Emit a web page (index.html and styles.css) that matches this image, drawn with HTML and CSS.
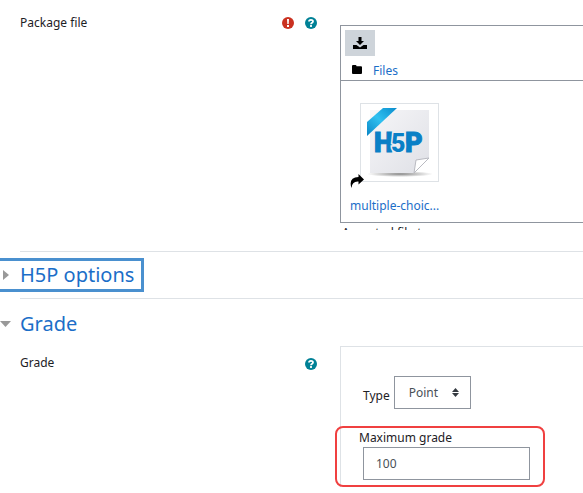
FILE: index.html
```html
<!DOCTYPE html>
<html lang="en">
<head>
  <meta charset="UTF-8">
  <title>H5P settings</title>
  <link rel="stylesheet" href="styles.css">
</head>
<body>
  <form>
    <div class="row package">
      <label class="name" for="download">Package file</label>
      <div class="icons">
        <svg class="icon required" viewBox="0 0 12 12"><circle cx="6" cy="6" r="6"/><path d="M5 2h2l-.3 5H5.3zM5 8h2v2H5z" fill="#fff"/></svg>
        <svg class="icon help" viewBox="0 0 12 12"><circle cx="6" cy="6" r="6"/><path d="M4 4.6C4 2.400 8 2.400 8 4.500 8 5.800 6 5.700 6 7.200" fill="none" stroke="#fff" stroke-width="1.8"/><path d="M5.100 8.100h1.800v1.800H5.100z" fill="#fff"/></svg>
      </div>
      <div class="files">
        <div class="filemanager">
          <div class="toolbar">
            <button type="button" class="download" id="download" aria-label="Download all">
              <svg width="14" height="12" viewBox="0 0 14 12"><path d="M5.500 0h3v4H11L7 8 3 4h2.500zM0 8h3.500L7 10.500 10.500 8H14v4H0z"/></svg>
            </button>
            <div class="path">
              <svg width="10" height="9" viewBox="0 0 10 9"><path d="M0 1.200Q0 0 1 0h2.500Q4.500 0 4.500 1.200H9q1 0 1 1V8q0 1-1 1H1Q0 9 0 8z"/></svg>
              <a href="#">Files</a>
            </div>
          </div>
          <div class="content">
            <div class="thumb">
              <svg width="68" height="74" viewBox="0 0 68 74">
                <defs>
                  <linearGradient id="paper" x1="0" y1="0" x2="1" y2="1">
                    <stop offset="0" stop-color="#f6f6f8"/><stop offset="1" stop-color="#dfe0e6"/>
                  </linearGradient>
                  <linearGradient id="ribbon" x1="0" y1="1" x2="1" y2="0">
                    <stop offset="0" stop-color="#0a86c6"/><stop offset=".5" stop-color="#2fc0f0"/><stop offset="1" stop-color="#0a8ccc"/>
                  </linearGradient>
                  <radialGradient id="shadow"><stop offset="0" stop-color="#888"/><stop offset="1" stop-color="#fff"/></radialGradient>
                </defs>
                <ellipse cx="34" cy="67" rx="33" ry="3" fill="url(#shadow)"/>
                <path d="M4 3h59v48L48 66H4z" fill="url(#paper)"/>
                <path d="M48 66l2-13 13-2z" fill="#fff" stroke="#b9bac1"/>
                <path d="M1 15L17 1h14L1 29z" fill="url(#ribbon)"/>
                <text class="logo" y="45"><tspan x="8">H</tspan><tspan x="39">P</tspan><tspan class="five" x="25">5</tspan></text>
              </svg>
              <svg class="alias" width="14" height="15" viewBox="0 0 14 15"><path d="M8.500 0L14 5.500 8.500 10.500V7.500Q2 7 1.500 14 -2 3.500 8.500 3z"/></svg>
            </div>
            <a class="filename" href="#">multiple-choic...</a>
          </div>
        </div>
        <div class="accepted"><span>Accepted file types:</span></div>
      </div>
    </div>

    <h3 class="section collapsed"><a href="#"><svg width="6" height="10" viewBox="0 0 6 10"><path d="M0 0l6 5-6 5z"/></svg><span>H5P options</span></a></h3>
    <h3 class="section expanded"><a href="#"><svg width="11" height="6" viewBox="0 0 11 6"><path d="M0 0h11L5.500 6z"/></svg><span>Grade</span></a></h3>

    <div class="row">
      <label class="name inset" for="type">Grade</label>
      <div class="icons inset">
        <svg class="icon help" viewBox="0 0 12 12"><circle cx="6" cy="6" r="6"/><path d="M4 4.600C4 2.400 8 2.400 8 4.500 8 5.800 6 5.700 6 7.200" fill="none" stroke="#fff" stroke-width="1.8"/><path d="M5.100 8.100h1.800v1.800H5.100z" fill="#fff"/></svg>
      </div>
      <div class="grade">
        <div class="type">
          <label for="type">Type</label>
          <div class="select">
            <select id="type"><option>Point</option><option>Scale</option><option>None</option></select>
            <svg width="7" height="9" viewBox="0 0 7 9"><path d="M0 4l3.500-4L7 4zM0 5h7L3.500 9z"/></svg>
          </div>
        </div>
        <div class="maximum">
          <label for="max">Maximum grade</label>
          <input type="text" id="max" value="100">
        </div>
      </div>
    </div>
  </form>
</body>
</html>
```
FILE: styles.css
```css
* {
  box-sizing: border-box;
}

body {
  margin: 0;
  background: #fff;
  color: #1d2125;
  font-family: "Noto Sans", sans-serif;
  font-size: 12px;
  line-height: 18px;
  overflow: hidden;
}

a {
  color: #1b6ec8;
  text-decoration: none;
}

svg {
  display: block;
}

.row {
  display: flex;
  align-items: flex-start;
  padding-left: 20px;
}

.package {
  padding-top: 14px;
  margin-bottom: 21px;
}

.name {
  flex: 1;
}

.icons {
  display: flex;
  gap: 11px;
  padding: 3px 23px 0 0;
}

.name.inset {
  padding-top: 8px;
}

.icons.inset {
  padding-top: 12px;
}

.icon {
  width: 12px;
  height: 12px;
}

.required {
  fill: #ca3120;
}

.help {
  fill: #008196;
}

.files,
.grade {
  width: 243px;
}

.files {
  padding-top: 11px;
}

.filemanager {
  border: 1px solid #8f959e;
  border-right: 0;
}

.toolbar {
  padding: 4px 4px 0;
  border-bottom: 1px solid #8f959e;
}

.download {
  display: flex;
  align-items: center;
  justify-content: center;
  width: 30px;
  height: 26px;
  padding: 0;
  border: 0;
  background: #ced4da;
}

.path {
  display: flex;
  gap: 11px;
  height: 24px;
  padding: 6px 0 0 7px;
}

.path svg {
  margin-top: 3px;
}

.content {
  padding: 22px 9px 7px;
}

.thumb {
  position: relative;
  width: 79px;
  height: 79px;
  margin-left: 10px;
  padding: 3px 5px;
  border: 1px solid #dee2e6;
}

.alias {
  position: absolute;
  left: -11px;
  bottom: -8px;
}

.logo {
  font: 900 27px Roboto, sans-serif;
  fill: #0a80c6;
  stroke: #0a80c6;
  stroke-width: 1px;
}

.five {
  font-size: 25px;
  stroke: #ecedf0;
  stroke-width: 3px;
  paint-order: stroke;
}

.filename {
  display: block;
  margin-top: 15px;
}

/* only the top of this line shows */
.accepted {
  height: 7px;
  padding: 1px 0 0 2px;
  overflow: hidden;
}

.section {
  margin: 0 0 0 20px;
  padding: 6px 0;
  border-top: 1px solid #dee2e6;
  font-size: 20px;
  font-weight: normal;
  line-height: 34px;
}

.section a {
  display: flex;
  align-items: center;
  width: fit-content;
  margin-left: -20px;
}

.section svg {
  margin-right: 9px;
  fill: #999;
}

.collapsed a {
  padding: 0 7px 0 3px;
  border: 3px solid #4a90cf;
  border-left: 0;
  line-height: 28px;
}

.collapsed svg {
  margin-right: 11px;
}

.expanded {
  padding: 8px 0 5px;
}

.grade {
  border: 1px solid #dee2e6;
  border-width: 1px 0 0 1px;
  padding-top: 29px;
}

.type {
  display: flex;
  align-items: center;
  gap: 4px;
  padding-left: 22px;
}

.type label {
  padding-top: 6px;
}

.select {
  position: relative;
}

.select svg {
  position: absolute;
  right: 12px;
  top: 12px;
  fill: #343a40;
}

select,
input {
  height: 33px;
  border: 1px solid #8f959e;
  border-radius: 0;
  background: #fff;
  color: #495057;
  font: inherit;
}

select {
  appearance: none;
  width: 77px;
  padding: 0 14px;
}

.maximum {
  width: 210px;
  margin: 17px 0 0 -6px;
  padding: 1px 13px 5px 22px;
  border: 2px solid #f04040;
  border-radius: 8px;
}

.maximum label {
  display: block;
}

input {
  display: block;
  width: 167px;
  margin-left: 4px;
  padding: 0 12px;
}
```
